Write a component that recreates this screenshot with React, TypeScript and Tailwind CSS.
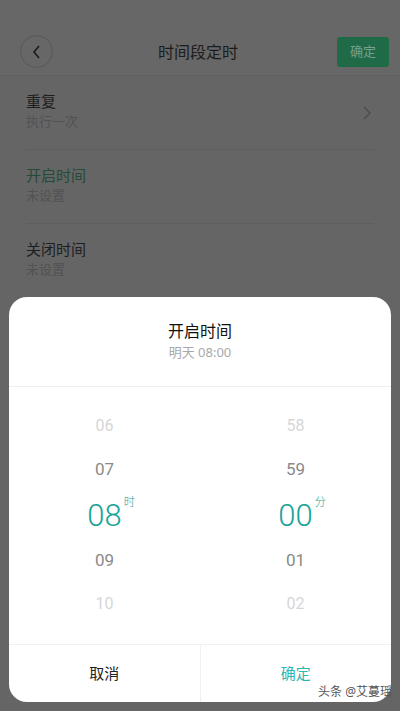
import React from 'react';

const font = { fontFamily: '"Noto Sans", "Noto Sans CJK SC", sans-serif' };

const Row = ({ title, sub, green, arrow }: { title: string; sub: string; green?: boolean; arrow?: boolean }) => (
  <div className="flex items-center justify-between h-[74px] border-b border-[#5e5e5e] mx-[26px]">
    <div className="flex flex-col pb-[4px]">
      <span className={`text-[15px] leading-[20px] ${green ? 'text-[#244a38]' : 'text-[#1e1e1e]'}`}>{title}</span>
      <span className="text-[13px] leading-[20px] text-[#525252]">{sub}</span>
    </div>
    {arrow && (
      <svg width="10" height="16" viewBox="0 0 10 16" className="mr-[2px]">
        <path d="M2 2 L8 8 L2 14" fill="none" stroke="#4a4a4a" strokeWidth="1.3" />
      </svg>
    )}
  </div>
);

const Picker = ({ items, unit }: { items: string[]; unit: string }) => (
  <div className="flex-1 flex flex-col items-center" style={{ fontFamily: 'Roboto, "Noto Sans", sans-serif' }}>
    <div className="h-[44px] flex items-center text-[16px] text-[#d6d6d6]">{items[0]}</div>
    <div className="h-[44px] flex items-center text-[17px] text-[#8a8a8a]">{items[1]}</div>
    <div className="h-[48px] flex items-center relative text-[31px] font-light text-[#17a398]">
      {items[2]}
      <span className="absolute -right-[13px] top-[2px] text-[11px] text-[#17a398]" style={font}>{unit}</span>
    </div>
    <div className="h-[42px] flex items-center text-[17px] text-[#8a8a8a]">{items[3]}</div>
    <div className="h-[44px] flex items-center text-[16px] text-[#d6d6d6]">{items[4]}</div>
  </div>
);

export default function App() {
  return (
    <div className="relative w-[400px] h-[711px] overflow-hidden bg-[#656565]" style={font}>
      <div className="h-[76px] bg-[#676767] border-b border-[#606060] flex items-center justify-between pl-[20px] pr-[11px] pt-[28px]">
        <div className="w-[33px] h-[33px] rounded-full border border-[#585858] flex items-center justify-center">
          <svg width="12" height="16" viewBox="0 0 12 16">
            <path d="M8 2 L3 8 L8 14" fill="none" stroke="#1a1a1a" strokeWidth="1.6" />
          </svg>
        </div>
        <span className="text-[16px] text-[#1c1c1c] ml-[6px]">时间段定时</span>
        <div className="w-[52px] h-[30px] rounded-[3px] bg-[#1f6b48] flex items-center justify-center text-[13px] text-[#7a9f8b]">确定</div>
      </div>
      <Row title="重复" sub="执行一次" arrow />
      <Row title="开启时间" sub="未设置" green />
      <Row title="关闭时间" sub="未设置" />

      <div className="absolute left-[9px] right-[9px] top-[297px] bottom-[9px] bg-white rounded-[18px] flex flex-col">
        <div className="h-[90px] flex flex-col items-center justify-center border-b border-[#efefef] pb-[2px]">
          <span className="text-[16px] leading-[22px] text-[#111]">开启时间</span>
          <span className="text-[13px] leading-[20px] text-[#a9a9a9]">明天 08:00</span>
        </div>
        <div className="flex pt-[17px] h-[258px] border-b border-[#f0f0f0]">
          <Picker items={['06', '07', '08', '09', '10']} unit="时" />
          <Picker items={['58', '59', '00', '01', '02']} unit="分" />
        </div>
        <div className="flex flex-1">
          <div className="flex-1 flex items-center justify-center text-[15px] text-[#222] border-r border-[#f0f0f0]">取消</div>
          <div className="flex-1 flex items-center justify-center text-[15px] text-[#2fb5b3]">确定</div>
        </div>
      </div>
      <span className="absolute right-[8px] bottom-[10px] text-[12px] text-[#555]">头条 @艾蔓瑶</span>
    </div>
  );
}
